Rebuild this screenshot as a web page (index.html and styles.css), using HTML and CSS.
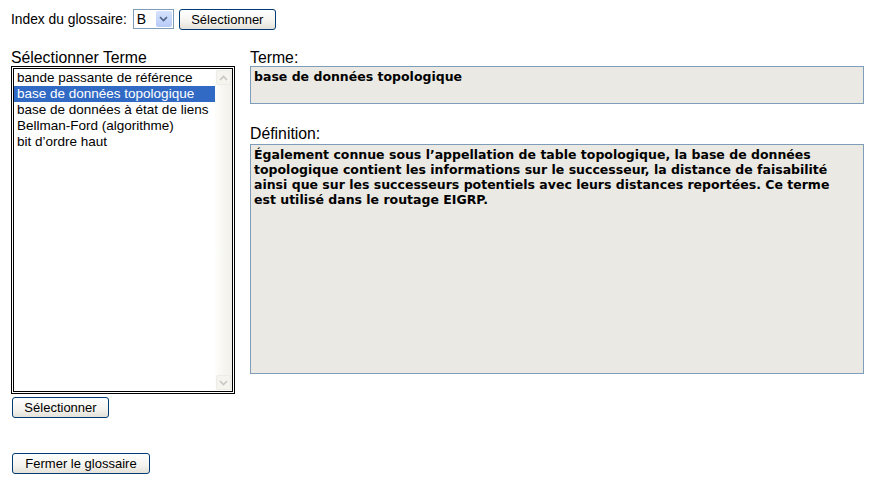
FILE: index.html
```html
<!DOCTYPE html>
<html lang="fr">
<head>
<meta charset="utf-8">
<title>Glossaire</title>
<link rel="stylesheet" href="styles.css">
</head>
<body>
<div class="page">
  <div class="toprow">
    <span class="lbl-small">Index du glossaire:</span>
    <div class="select">
      <span class="select-val">B</span>
      <span class="select-btn">
        <svg width="9" height="6" viewBox="0 0 9 6"><path d="M1 1 L4.5 4.5 L8 1" fill="none" stroke="#4d6185" stroke-width="1.6"/></svg>
      </span>
    </div>
    <button class="btn">Sélectionner</button>
  </div>
  <div class="main">
    <div class="leftcol">
      <div class="lbl">Sélectionner Terme</div>
      <div class="listbox">
        <ul class="items">
          <li>bande passante de référence</li>
          <li class="sel">base de données topologique</li>
          <li>base de données à état de liens</li>
          <li>Bellman-Ford (algorithme)</li>
          <li>bit d’ordre haut</li>
        </ul>
        <div class="scroll">
          <span class="arrow">
            <svg width="9" height="6" viewBox="0 0 9 6"><path d="M1 5 L4.5 1.5 L8 5" fill="none" stroke="#c9c8bf" stroke-width="1.6"/></svg>
          </span>
          <span class="arrow">
            <svg width="9" height="6" viewBox="0 0 9 6"><path d="M1 1 L4.5 4.5 L8 1" fill="none" stroke="#c9c8bf" stroke-width="1.6"/></svg>
          </span>
        </div>
      </div>
      <button class="btn btn-sel">Sélectionner</button>
      <button class="btn btn-close">Fermer le glossaire</button>
    </div>
    <div class="rightcol">
      <div class="lbl">Terme:</div>
      <div class="box box-term">base de données topologique</div>
      <div class="lbl lbl-def">Définition:</div>
      <div class="box box-def">Également connue sous l’appellation de table topologique, la base de données topologique contient les informations sur le successeur, la distance de faisabilité ainsi que sur les successeurs potentiels avec leurs distances reportées. Ce terme est utilisé dans le routage EIGRP.</div>
    </div>
  </div>
</div>
</body>
</html>
```

FILE: styles.css
```css
html, body {
  margin: 0;
  padding: 0;
  background: #ffffff;
}
body {
  font-family: "Liberation Sans", Arial, sans-serif;
  font-size: 13px;
  color: #000;
}
.page {
  padding: 8px 0 0 11px;
}
.toprow {
  display: flex;
  align-items: center;
  height: 22px;
}
.lbl-small {
  font-size: 13.8px;
  margin-right: 6px;
}
.select {
  display: flex;
  align-items: center;
  width: 38px;
  height: 18px;
  border: 1px solid #7f9db9;
  background: #fff;
  padding: 0 1px 0 0;
}
.select-val {
  flex: 1;
  padding-left: 3px;
  font-size: 14px;
}
.select-btn {
  display: flex;
  align-items: center;
  justify-content: center;
  width: 16px;
  height: 16px;
  background: linear-gradient(#d6e2fc, #b7cbf7);
  border-radius: 2px;
}
.btn {
  font-family: "Liberation Sans", Arial, sans-serif;
  font-size: 13px;
  color: #000;
  height: 21px;
  padding: 0 10px;
  border: 1px solid #003c74;
  border-radius: 3px;
  background: linear-gradient(#ffffff 0%, #f4f3ee 60%, #e3e1d8 100%);
  line-height: 19px;
}
.toprow .btn {
  margin-left: 5px;
  width: 97px;
}
.main {
  display: flex;
  margin-top: 20px;
}
.leftcol {
  display: flex;
  flex-direction: column;
  align-items: flex-start;
  width: 224px;
}
.rightcol {
  display: flex;
  flex-direction: column;
  margin-left: 15px;
  width: 614px;
}
.lbl {
  font-size: 15.8px;
  line-height: 15px;
  height: 16px;
  color: #000;
  white-space: nowrap;
}
.listbox {
  display: flex;
  width: 224px;
  height: 328px;
  box-sizing: border-box;
  border: 3px double #000;
  background: #fff;
}
.items {
  list-style: none;
  margin: 0;
  padding: 1px 0 0 0;
  flex: 1;
  font-size: 13.5px;
}
.items li {
  height: 16px;
  line-height: 16px;
  padding-left: 3px;
  white-space: nowrap;
}
.items li.sel {
  background: #316ac5;
  color: #fff;
}
.scroll {
  display: flex;
  flex-direction: column;
  justify-content: space-between;
  width: 17px;
  margin: 1px 0 1px 0;
  background: linear-gradient(90deg, #fdfdfa, #f1f0ea);
}
.arrow {
  display: flex;
  align-items: center;
  justify-content: center;
  width: 15px;
  height: 15px;
  margin-left: 1px;
  border: 1px solid #eeede5;
  border-radius: 2px;
  background: #f5f4ef;
  box-sizing: border-box;
}
.btn-sel {
  margin-top: 3px;
  margin-left: 1px;
  width: 97px;
}
.btn-close {
  margin-top: 35px;
  margin-left: 1px;
  width: 138px;
}
.box {
  border: 1px solid #7f9db9;
  background: #ebe9e3;
  font-family: "DejaVu Sans", Verdana, sans-serif;
  font-weight: bold;
  font-size: 12.5px;
  line-height: 15px;
  padding: 2px 20px 2px 3px;
  box-sizing: border-box;
}
.box-term {
  height: 38px;
}
.lbl-def {
  margin-top: 22px;
}
.box-def {
  height: 230px;
  margin-top: 2px;
}
```
